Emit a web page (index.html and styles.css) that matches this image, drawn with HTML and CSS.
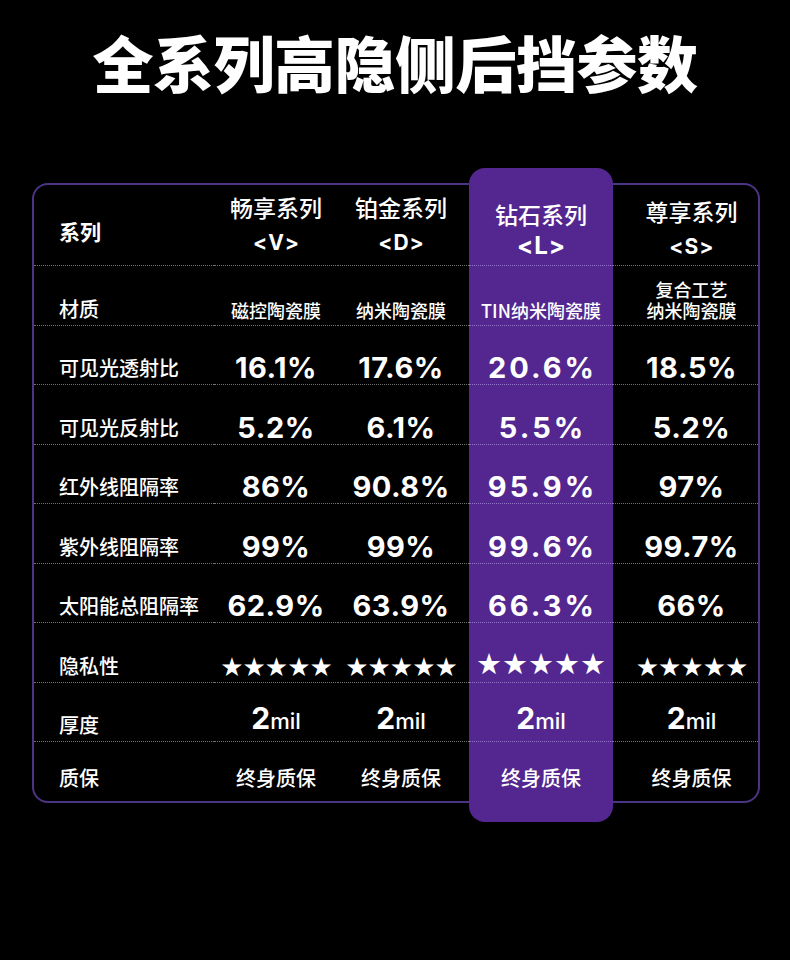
FILE: index.html
```html
<!DOCTYPE html>
<html lang="zh-CN">
<head>
<meta charset="utf-8">
<title>全系列高隐侧后挡参数</title>
<link rel="stylesheet" href="styles.css">
</head>
<body>
<h1 class="title">全系列高隐侧后挡参数</h1>
<div class="table">
  <div class="col c-label">
    <div class="cell h"><span class="lbl-head">系列</span></div>
    <div class="cell"><span class="lbl">材质</span></div>
    <div class="cell"><span class="lbl">可见光透射比</span></div>
    <div class="cell"><span class="lbl">可见光反射比</span></div>
    <div class="cell"><span class="lbl">红外线阻隔率</span></div>
    <div class="cell"><span class="lbl">紫外线阻隔率</span></div>
    <div class="cell"><span class="lbl">太阳能总阻隔率</span></div>
    <div class="cell"><span class="lbl">隐私性</span></div>
    <div class="cell"><span class="lbl">厚度</span></div>
    <div class="cell last"><span class="lbl">质保</span></div>
  </div>
  <div class="col c-v">
    <div class="cell h"><span class="hn">畅享系列</span><span class="hc">&lt;V&gt;</span></div>
    <div class="cell"><span class="t">磁控陶瓷膜</span></div>
    <div class="cell"><span class="v">16.1%</span></div>
    <div class="cell"><span class="v">5.2%</span></div>
    <div class="cell"><span class="v">86%</span></div>
    <div class="cell"><span class="v">99%</span></div>
    <div class="cell"><span class="v">62.9%</span></div>
    <div class="cell"><span class="stars">★★★★★</span></div>
    <div class="cell"><span class="thick"><b>2</b>mil</span></div>
    <div class="cell last"><span class="w">终身质保</span></div>
  </div>
  <div class="col c-d">
    <div class="cell h"><span class="hn">铂金系列</span><span class="hc">&lt;D&gt;</span></div>
    <div class="cell"><span class="t">纳米陶瓷膜</span></div>
    <div class="cell"><span class="v">17.6%</span></div>
    <div class="cell"><span class="v">6.1%</span></div>
    <div class="cell"><span class="v">90.8%</span></div>
    <div class="cell"><span class="v">99%</span></div>
    <div class="cell"><span class="v">63.9%</span></div>
    <div class="cell"><span class="stars">★★★★★</span></div>
    <div class="cell"><span class="thick"><b>2</b>mil</span></div>
    <div class="cell last"><span class="w">终身质保</span></div>
  </div>
  <div class="col c-l">
    <div class="cell h"><span class="hn">钻石系列</span><span class="hc">&lt;L&gt;</span></div>
    <div class="cell"><span class="t">TIN纳米陶瓷膜</span></div>
    <div class="cell"><span class="v">20.6%</span></div>
    <div class="cell"><span class="v">5.5%</span></div>
    <div class="cell"><span class="v">95.9%</span></div>
    <div class="cell"><span class="v">99.6%</span></div>
    <div class="cell"><span class="v">66.3%</span></div>
    <div class="cell"><span class="stars">★★★★★</span></div>
    <div class="cell"><span class="thick"><b>2</b>mil</span></div>
    <div class="cell last"><span class="w">终身质保</span></div>
  </div>
  <div class="col c-s">
    <div class="cell h"><span class="hn">尊享系列</span><span class="hc">&lt;S&gt;</span></div>
    <div class="cell"><span class="t line">复合工艺</span><span class="t line">纳米陶瓷膜</span></div>
    <div class="cell"><span class="v">18.5%</span></div>
    <div class="cell"><span class="v">5.2%</span></div>
    <div class="cell"><span class="v">97%</span></div>
    <div class="cell"><span class="v">99.7%</span></div>
    <div class="cell"><span class="v">66%</span></div>
    <div class="cell"><span class="stars">★★★★★</span></div>
    <div class="cell"><span class="thick"><b>2</b>mil</span></div>
    <div class="cell last"><span class="w">终身质保</span></div>
  </div>
</div>
</body>
</html>
```
FILE: styles.css
```css
* { box-sizing: border-box; margin: 0; padding: 0; }

html, body {
  background: #000;
}

body {
  width: 790px;
  height: 960px;
  color: #fff;
  font-family: "Noto Sans CJK SC", "Noto Sans", sans-serif;
  overflow: hidden;
}

.title {
  padding-top: 31px;
  margin-bottom: 91px;
  font-size: 61px;
  line-height: 61px;
  font-weight: 900;
  text-align: center;
  letter-spacing: -0.5px;
}

.table {
  display: flex;
  width: 728px;
  margin-left: 32px;
  border: 2px solid #4c3484;
  border-radius: 16px;
}

.col {
  display: flex;
  flex-direction: column;
}

.c-label { width: 180px; }
.c-v { width: 124px; }
.c-d { width: 131px; }
.c-l {
  width: 144px;
  background: #53278f;
  border-radius: 16px;
  margin: -17px 0 -21px;
  padding: 17px 0 21px;
}
.c-s { width: 145px; }

.cell {
  height: 59px;
  border-bottom: 1px dotted #727272;
  display: flex;
  flex-direction: column;
  justify-content: flex-end;
  align-items: center;
  padding-bottom: 6px;
  line-height: 1;
  font-size: 18px;
}
.cell:nth-child(even) { height: 60px; }
.cell.h {
  height: 81px;
  justify-content: flex-start;
  padding-top: 11px;
  padding-bottom: 0;
}
.cell.last {
  height: 59px;
  border-bottom: none;
  padding-bottom: 13px;
}

.c-l .cell { border-bottom-color: #9274c8; }
.c-d .cell { padding-right: 5px; }
.c-s .cell { padding-left: 12px; }

.c-label .cell {
  align-items: flex-start;
  padding-left: 25px;
}
.c-label .cell.h { padding-top: 36px; }

.lbl-head {
  font-size: 21px;
  font-weight: 700;
}
.lbl {
  font-size: 20px;
  font-weight: 500;
}

.hn {
  font-size: 23px;
  font-weight: 500;
  line-height: 23px;
}
.hc {
  margin-top: 14px;
  font-family: Inter, "Liberation Sans", sans-serif;
  font-weight: 700;
  font-size: 21px;
  line-height: 20px;
  letter-spacing: 1px;
  margin-left: 1px;
}
.c-l .cell.h { padding-top: 18px; }
.c-l .hc {
  margin-top: 8px;
  font-size: 24px;
  line-height: 23px;
}
.c-s .cell.h { padding-top: 15px; }

.t {
  font-size: 18px;
  font-weight: 500;
  text-align: center;
}
.t.line {
  display: block;
  line-height: 21px;
}
.t.line:last-child { margin-bottom: -2px; }

.v {
  font-family: Inter, "Liberation Sans", sans-serif;
  font-weight: 700;
  font-size: 29px;
  line-height: 24px;
  margin-bottom: -2px;
  letter-spacing: 0.5px;
}
.c-l .v { letter-spacing: 3px; margin-left: 3px; }

.stars {
  font-family: "DejaVu Sans", sans-serif;
  font-size: 26px;
  letter-spacing: -1px;
  margin-bottom: -4px;
}
.c-l .stars { font-size: 29px; letter-spacing: 0; margin-bottom: -3px; }

.thick {
  font-family: Inter, "Liberation Sans", sans-serif;
  font-size: 22px;
  font-weight: 500;
  line-height: 24px;
  margin-bottom: 2px;
}
.thick b {
  font-size: 30px;
  font-weight: 700;
}

.w {
  font-size: 20px;
  font-weight: 500;
}
```
